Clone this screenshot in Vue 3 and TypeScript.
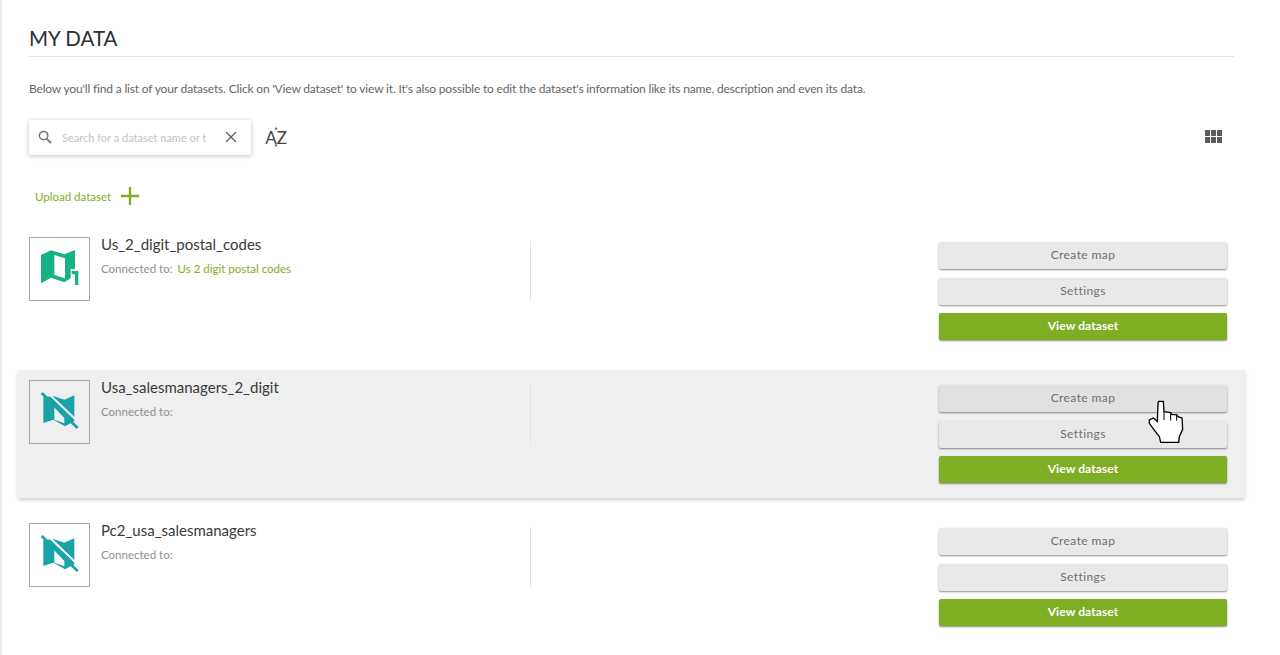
<template>
  <div class="page">
    <h1 class="title">MY DATA</h1>
    <p class="intro">
      Below you'll find a list of your datasets. Click on 'View dataset' to view it. It's also possible to edit the dataset's information like its name, description and even its data.
    </p>

    <div class="toolbar">
      <div class="search">
        <svg class="search-icon" width="14" height="14" viewBox="0 0 14 14">
          <circle cx="5.6" cy="5.6" r="4.2" fill="none" stroke="#757575" stroke-width="1.5" />
          <path d="M8.8 8.8 13 13" stroke="#757575" stroke-width="1.8" />
        </svg>
        <span class="placeholder">Search for a dataset name or t</span>
        <svg class="clear-icon" width="12" height="12" viewBox="0 0 12 12">
          <path d="M1 1 11 11M11 1 1 11" stroke="#616161" stroke-width="1.4" />
        </svg>
      </div>
      <div class="sort">
        <span class="sort-text">AZ</span>
        <svg class="sort-arrows" width="6" height="22" viewBox="0 0 6 22">
          <path d="M3 1 4.6 3.4H1.4ZM3 21 1.4 18.6H4.6Z" fill="#555" />
        </svg>
      </div>
      <div class="spacer"></div>
      <div class="grid-icon">
        <span v-for="n in 6" :key="n"></span>
      </div>
    </div>

    <div class="upload">
      <span>Upload dataset</span>
      <svg width="18" height="18" viewBox="0 0 18 18">
        <path d="M9 0V18M0 9H18" stroke="#7fae25" stroke-width="2.4" />
      </svg>
    </div>

    <div class="rows">
      <div v-for="row in rows" :key="row.name" class="row" :class="{ hovered: row.hovered }">
        <div class="thumb">
          <svg v-if="row.connected" width="59" height="62" viewBox="15 9 177 186">
            <path
              fill="#14b285"
              fill-rule="evenodd"
              d="M48 60 78 46 118 58 150 45V102H137V130L118 142 78 128 48 145ZM88 60V120L120 130V70Z"
            />
            <path fill="#14b285" d="M140 108H160V150H150V118H140Z" />
          </svg>
          <svg v-else width="59" height="62" viewBox="15 9 177 186">
            <path
              fill="#17a3a8"
              fill-rule="evenodd"
              d="M55 58 85 54 118 65 148 52V130L120 145 85 125 55 135ZM88 88V125L118 136V120Z"
            />
            <path d="M72 48 160 132" :stroke="row.hovered ? '#efefef' : '#fff'" stroke-width="6" />
            <path d="M50 45 158 150" stroke="#17a3a8" stroke-width="8" />
          </svg>
        </div>
        <div class="info">
          <div class="name">{{ row.name }}</div>
          <div class="connected">
            <span>Connected to:</span>
            <a v-if="row.connected" class="link">{{ row.connected }}</a>
          </div>
        </div>
        <div class="divider"></div>
        <div class="actions">
          <button class="btn">Create map</button>
          <button class="btn">Settings</button>
          <button class="btn primary">View dataset</button>
        </div>
      </div>
    </div>

    <svg class="cursor" width="60" height="60" viewBox="0 0 180 180">
      <path
        fill="#fff"
        stroke="#000"
        stroke-width="4"
        d="M56 34H70L72 65 92 68 96 74H110L114 80 126 84 128 118 118 140 116 157H62L58 140 44 122 28 100V90L40 84 52 94 54 40Z"
      />
      <path fill="none" stroke="#000" stroke-width="3" d="M72 65V90M92 70V92M110 76V92" />
    </svg>
  </div>
</template>

<script setup lang="ts">
interface DataRow {
  name: string;
  connected: string;
  hovered?: boolean;
}

const rows: DataRow[] = [
  { name: 'Us_2_digit_postal_codes', connected: 'Us 2 digit postal codes' },
  { name: 'Usa_salesmanagers_2_digit', connected: '', hovered: true },
  { name: 'Pc2_usa_salesmanagers', connected: '' },
];
</script>

<style>
html,
body {
  margin: 0;
  background: #fff;
}
</style>

<style scoped>
.page {
  position: relative;
  box-sizing: border-box;
  width: 1280px;
  height: 655px;
  overflow: hidden;
  padding: 0 46px 0 29px;
  font-family: Lato, "Open Sans", sans-serif;
  background: linear-gradient(to right, #e6e6e6 0, #f0f0f0 2px, #fff 3px);
}

.title {
  margin: 0;
  padding-top: 26px;
  height: 30px;
  border-bottom: 1px solid #e4e4e4;
  font-size: 20.5px;
  line-height: 24px;
  font-weight: 400;
  color: #2b2f36;
}

.intro {
  margin: 25px 0 0;
  font-size: 12px;
  line-height: 14px;
  letter-spacing: -0.17px;
  color: #666;
}

.toolbar {
  display: flex;
  align-items: center;
  margin-top: 23px;
  height: 36px;
}

.search {
  display: flex;
  align-items: center;
  box-sizing: border-box;
  width: 222px;
  height: 35px;
  padding-left: 9px;
  background: #fff;
  box-shadow: 0 1px 4px rgba(0, 0, 0, 0.25);
  border-radius: 2px;
}

.placeholder {
  margin-left: 10px;
  width: 151px;
  white-space: nowrap;
  font-size: 11px;
  color: #c4c4c4;
}

.clear-icon {
  margin-left: 12px;
}

.sort {
  position: relative;
  display: flex;
  align-items: center;
  justify-content: center;
  width: 22px;
  height: 24px;
  margin-left: 14px;
}

.sort-text {
  font-size: 17px;
  color: #444;
}

.sort-arrows {
  position: absolute;
  left: 8px;
  top: 1px;
}

.spacer {
  flex: 1;
}

.grid-icon {
  display: grid;
  grid-template-columns: repeat(3, 5px);
  grid-template-rows: repeat(2, 6px);
  gap: 1px;
  margin: -2px 12px 0 0;
}

.grid-icon span {
  background: #5c5c5c;
}

.upload {
  display: flex;
  align-items: center;
  gap: 10px;
  margin: 28px 0 0 6px;
  height: 26px;
  font-size: 11.5px;
  color: #7fae25;
}

.rows {
  display: flex;
  flex-direction: column;
  gap: 15px;
  margin: 18px -11px 0 -11px;
  width: 1227px;
}

.row {
  display: flex;
  box-sizing: border-box;
  height: 128px;
  padding: 10px 18px 0 11px;
}

.row.hovered {
  background: #efefef;
  box-shadow: 0 2px 4px rgba(0, 0, 0, 0.2);
}

.thumb {
  display: flex;
  align-items: center;
  justify-content: center;
  box-sizing: border-box;
  width: 61px;
  height: 64px;
  border: 1px solid #a8a8a8;
  flex: none;
}

.info {
  width: 440px;
  padding-left: 11px;
  flex: none;
  box-sizing: border-box;
}

.name {
  margin-top: -2px;
  font-size: 15px;
  line-height: 18px;
  color: #3a3a3a;
}

.connected {
  display: flex;
  gap: 5px;
  margin-top: 9px;
  font-size: 11.5px;
  line-height: 14px;
  color: #8e8e8e;
}

.link {
  color: #7fae25;
}

.divider {
  width: 1px;
  height: 60px;
  margin-top: 4px;
  background: #e2e2e2;
  flex: none;
}

.actions {
  display: flex;
  flex-direction: column;
  gap: 8.5px;
  width: 288px;
  margin: 5px 0 0 auto;
}

.btn {
  display: block;
  width: 100%;
  height: 27px;
  padding: 0 0 2px;
  border: 0;
  border-radius: 2px;
  background: #e9e9e9;
  box-shadow: 0 1px 2px rgba(0, 0, 0, 0.45);
  font-family: Lato, "Open Sans", sans-serif;
  font-size: 12px;
  letter-spacing: 0.4px;
  color: #707070;
}

.hovered .btn:first-child {
  background: #e1e1e1;
}

.btn.primary {
  background: #7fae25;
  color: #fff;
  font-weight: 700;
  letter-spacing: 0.1px;
}

.cursor {
  position: absolute;
  left: 1140px;
  top: 390px;
}
</style>
